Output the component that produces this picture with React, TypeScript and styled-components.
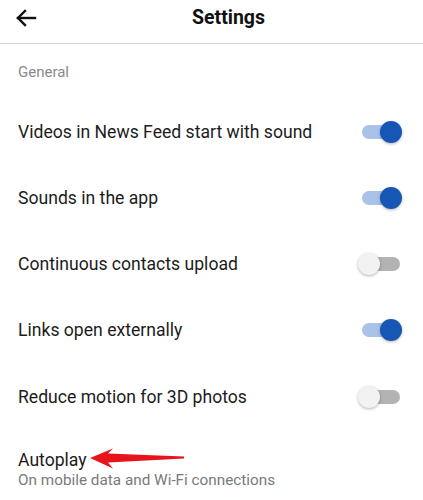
import styled, { createGlobalStyle } from 'styled-components';

const GlobalStyle = createGlobalStyle`
  body {
    margin: 0;
    background: #fff;
    font-family: Roboto, "Liberation Sans", sans-serif;
  }
`;

const Page = styled.div`
  width: 423px;
  height: 500px;
  overflow: hidden;
  background: #fff;
`;

const Header = styled.div`
  height: 44px;
  display: flex;
  align-items: center;
  border-bottom: 1px solid #d6d6d6;
  box-sizing: border-box;
`;

const BackButton = styled.div`
  width: 24px;
  height: 24px;
  margin-left: 14px;
  margin-top: -8px;
  display: flex;
  align-items: center;
`;

const Title = styled.h1`
  flex: 1;
  margin: -8px 0 0 0;
  padding: 0 38px 0 34px;
  text-align: center;
  font-size: 19.5px;
  font-weight: 700;
  color: #111;
`;

const SectionLabel = styled.div`
  height: 54px;
  box-sizing: border-box;
  padding: 2px 0 0 18px;
  display: flex;
  align-items: center;
  font-size: 15px;
  color: #8a8a8a;
`;

const Row = styled.div`
  height: 66.25px;
  display: flex;
  align-items: center;
  justify-content: space-between;
  padding: 1px 23px 0 18px;
  box-sizing: border-box;
`;

const Label = styled.div`
  font-size: 17.6px;
  line-height: 20px;
  color: #1c1c1c;
`;

const Track = styled.div<{ on: boolean }>`
  position: relative;
  width: 38px;
  height: 14px;
  border-radius: 7px;
  background: ${p => (p.on ? '#a9c2e8' : '#b3b3b3')};
`;

const Thumb = styled.div<{ on: boolean }>`
  position: absolute;
  top: -4px;
  left: ${p => (p.on ? '18px' : '-4px')};
  width: 22px;
  height: 22px;
  border-radius: 50%;
  background: ${p => (p.on ? '#1657b5' : '#f2f2f2')};
  box-shadow: 0 1px 3px rgba(0, 0, 0, 0.3);
`;

const AutoplayRow = styled.div`
  position: relative;
  padding: 21px 18px 0;
`;

const SubLabel = styled.div`
  font-size: 15.3px;
  line-height: 18px;
  margin-top: 1px;
  color: #7a7a7a;
`;

const Arrow = styled.svg`
  position: absolute;
  left: 88px;
  top: 16px;
`;

const Toggle = ({ on }: { on: boolean }) => (
  <Track on={on}>
    <Thumb on={on} />
  </Track>
);

const settings = [
  { label: 'Videos in News Feed start with sound', on: true },
  { label: 'Sounds in the app', on: true },
  { label: 'Continuous contacts upload', on: false },
  { label: 'Links open externally', on: true },
  { label: 'Reduce motion for 3D photos', on: false },
];

const App = () => {
  return (
    <Page>
      <GlobalStyle />
      <Header>
        <BackButton>
          <svg width="24" height="24" viewBox="0 0 24 24" fill="none" stroke="#111" strokeWidth="2.4" strokeLinecap="square">
            <path d="M21 12H4" />
            <path d="M11 5l-7 7 7 7" />
          </svg>
        </BackButton>
        <Title>Settings</Title>
      </Header>
      <SectionLabel>General</SectionLabel>
      {settings.map(s => (
        <Row key={s.label}>
          <Label>{s.label}</Label>
          <Toggle on={s.on} />
        </Row>
      ))}
      <AutoplayRow>
        <Label>Autoplay</Label>
        <SubLabel>On mobile data and Wi-Fi connections</SubLabel>
        <Arrow width="100" height="27" viewBox="0 0 100 27">
          <path d="M2 13 L25 3.5 L20 8.5 L96 11.5 L96 13.5 L20 17.5 L25 23.5 Z" fill="#e8141b" />
        </Arrow>
      </AutoplayRow>
    </Page>
  );
};

export default App;
